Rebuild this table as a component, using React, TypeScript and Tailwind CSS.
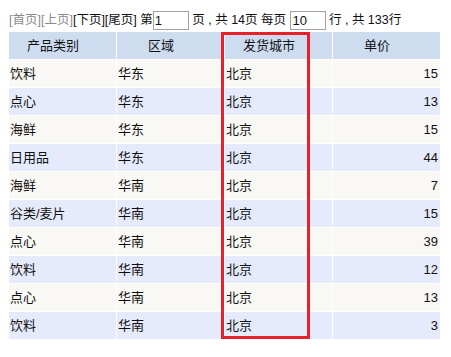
import React from "react";

const rows: [string, string, string, number][] = [
  ["饮料", "华东", "北京", 15],
  ["点心", "华东", "北京", 13],
  ["海鲜", "华东", "北京", 15],
  ["日用品", "华东", "北京", 44],
  ["海鲜", "华南", "北京", 7],
  ["谷类/麦片", "华南", "北京", 15],
  ["点心", "华南", "北京", 39],
  ["饮料", "华南", "北京", 12],
  ["点心", "华南", "北京", 13],
  ["饮料", "华南", "北京", 3],
];

export default function App() {
  return (
    <div
      className="w-[451px] h-[357px] bg-white text-[#111] pl-[9px] pt-[11px]"
      style={{ fontFamily: '"Liberation Sans", "Noto Sans CJK SC", sans-serif' }}
    >
      <div className="flex items-center h-[19px] text-[12.5px] leading-none whitespace-pre">
        <span className="text-[#8a8a8a]">[首页][上页]</span>
        <span>[下页][尾页] 第</span>
        <span className="w-[36px] h-[19px] border border-[#a0a0a0] flex items-center pl-[1px] text-[13px]">1</span>
        <span> 页 , 共 14页 每页 </span>
        <span className="w-[36px] h-[19px] border border-[#a0a0a0] flex items-center pl-[2px] text-[13px]">10</span>
        <span> 行 , 共 133行</span>
      </div>
      <div className="relative mt-[2px] w-[431px]">
        <div className="grid grid-cols-4 gap-px text-[13px]">
          {["产品类别", "区域", "发货城市", "单价"].map((h) => (
            <div key={h} className="h-[27px] bg-[#cedcf0] flex items-center justify-center pr-[19px]">
              {h}
            </div>
          ))}
          {rows.map((r, i) => {
            const bg = i % 2 === 0 ? "bg-[#f9f8f4]" : "bg-[#e5eafc]";
            return (
              <React.Fragment key={i}>
                <div className={`h-[27px] ${bg} flex items-center pl-[1px]`}>{r[0]}</div>
                <div className={`h-[27px] ${bg} flex items-center pl-[1px]`}>{r[1]}</div>
                <div className={`h-[27px] ${bg} flex items-center pl-[1px]`}>{r[2]}</div>
                <div className={`h-[27px] ${bg} flex items-center justify-end pr-[2px]`}>{r[3]}</div>
              </React.Fragment>
            );
          })}
        </div>
        <div className="absolute left-[212px] top-0 w-[89px] h-[307px] border-[3px] border-[#e8202a]" />
      </div>
    </div>
  );
}
